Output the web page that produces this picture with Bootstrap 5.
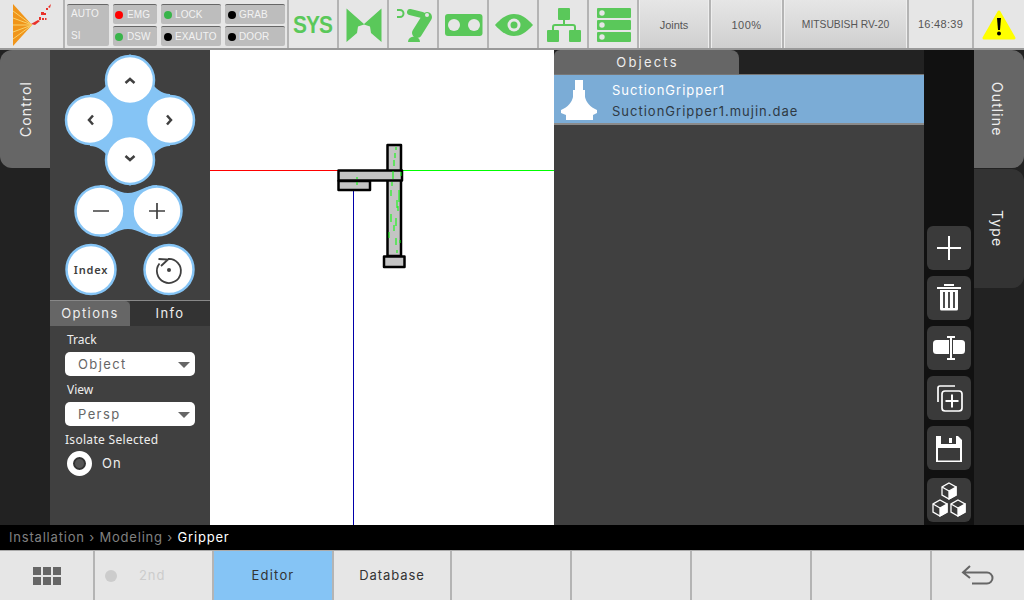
<!DOCTYPE html>
<html lang="en">
<head>
<meta charset="utf-8">
<title>Gripper</title>
<link href="https://cdn.jsdelivr.net/npm/bootstrap@5.3.0/dist/css/bootstrap.min.css" rel="stylesheet">
<style>
html,body{width:1024px;height:600px;overflow:hidden;margin:0;background:#000}
body{font-family:"Inter","Liberation Sans",sans-serif}
svg{display:block}
.topbar{height:50px;background:#e6e6e6;border-bottom:2px solid #999;font-family:"Liberation Sans",sans-serif}
.tcell{flex:none;border-right:2px solid #b4b4b4;height:48px}
.w-logo{width:65px}.w-stat{width:224px}.w-ic{width:50px}
.w-j{width:72px}.w-p{width:73px}.w-m{width:125px}.w-t{width:65px}.w-w{width:50px;border-right:0}
.systxt{font-size:24px;font-weight:700;color:#5ac85a;letter-spacing:-1px;transform:scaleX(.87);line-height:1;padding-top:1px}
.gbtn{background:linear-gradient(#e6e6e6,#cfcfcf);box-shadow:inset 1px 0 #eee,inset -1px 0 #eee;font-size:11px;color:#555;padding-top:2px}
.ls-a{letter-spacing:.5px}
.ls-b{font-size:10.3px}
.clock{font-size:11px;color:#555;letter-spacing:.3px;padding-top:1px}
.stat{padding:4px 2px 2px 2px;gap:4px;font-size:10px;letter-spacing:.1px;color:#f2f2f2}
.scol{gap:2px}
.sc-a{width:44px}.sc-b{width:60px}
.spill{height:20px;background:#bdbdbd;border-top:1px solid #666;border-radius:2px;padding-left:3px;gap:3px;line-height:1}
.sc-a .spill{padding-left:2px;gap:4px}
.sauto{width:42px;height:42px;background:#bdbdbd;border-top:1px solid #666;border-radius:2px;padding:1px 4px 2px;line-height:16px}
.dot{width:8px;height:8px;border-radius:50%;flex:none}
.d-r{background:#f00}.d-g{background:#38b44a}.d-k{background:#000}
.mainarea{height:475px}
.rail{width:50px;flex:none;background:#222}
.vtab{width:50px;height:118px;background:#666;color:#eee;font-size:14px;letter-spacing:1.1px;writing-mode:vertical-rl}
.vtab-l{transform:rotate(180deg);border-radius:0 12px 12px 0}
.vtab-r{border-radius:0 12px 12px 0;padding-right:3px}
.vtab-off{background:#333;height:119px;margin-top:1px}
.lpanel{width:160px;flex:none;background:#404040;color:#eee}
.ltabs{height:26px;border-top:1px solid #888;font-size:13px;letter-spacing:1.4px}
.ltab{width:80px;background:#333;padding-top:1px}
.ltab-on{background:#666;border-radius:0 5px 0 0}
.lbody{padding:6px 15px 0 15px;font-family:"Noto Sans","Liberation Sans",sans-serif;font-size:12px}
.flabel{padding-left:2px;height:20px;line-height:15px}
.flabel-w{padding-left:0;height:19px;line-height:16px;letter-spacing:.3px}
.fsel{height:24px;background:#fff;border-radius:5px;color:#666;font-family:"Inter",sans-serif;font-size:13px;letter-spacing:1.4px;padding:1px 5px 0 13px;margin-bottom:6px}
.caret{width:0;height:0;border-left:6px solid transparent;border-right:6px solid transparent;border-top:6px solid #666}
.radioo{width:25px;height:25px;border-radius:50%;border:6px solid #fff;background:#555;box-shadow:inset 0 0 0 2px #333;flex:none}
.optrow{font-family:"Inter",sans-serif;font-size:13px;letter-spacing:1px;padding-left:2px;gap:10px}
.stage{width:344px;flex:none;background:#fff}
.objs{width:370px;flex:none;background:#404040;font-size:13px;letter-spacing:1px}
.objhead{height:25px;background:#222;border-bottom:1px solid #777}
.objtab{width:185px;height:24px;background:#666;color:#eee;border-radius:6px 8px 0 0;letter-spacing:2.2px;padding-top:1px;padding-left:2px}
.objrow{height:50px;background:#7bacd6;border-bottom:2px solid #8a8a8a;line-height:21px}
.objic{width:58px;flex:none}
.objtxt{padding-top:5px}
.t-sub{color:#2f3a45}
.tools{width:50px;flex:none;background:#111;padding:0 3px 3px 3px;gap:6px}
.tbtn{width:44px;height:44px;background:#3a3a3a;border-radius:6px;flex:none}
.tbtn-gap{margin-bottom:2px}
.crumbs{height:25px;background:#000;color:#808080;font-size:13px;letter-spacing:.8px;padding-left:9px;line-height:25px}
.botbar{height:50px;background:#e6e6e6;border-top:1px solid #aaa;color:#333;font-size:13px;letter-spacing:.9px}
.bcell{width:120px;flex:none;border-right:2px solid #b4b4b4;padding-top:1px}
.bcell-a{width:95px}.bcell-b{width:119px;color:#ccc;padding-left:10px;gap:22px}.bcell-c{width:118px;background:#85c4f5;border-right:0;letter-spacing:1.2px}
.bcell-d{width:120px;border-left:2px solid #b4b4b4}
.bcell-e{flex:1 1 auto;border-right:0}
.discdot{width:12px;height:12px;border-radius:50%;background:#ccc}
</style>
</head>
<body>
<div class="topbar d-flex">
  <div class="tcell w-logo">
    <svg width="63" height="48" viewBox="0 0 63 48">
      <path fill="#f0951a" d="M13 4 32 25 13 46Z"/>
      <g stroke="#f9d26a" stroke-width="1" fill="none"><path d="M13 11 32 25M13 18 32 25M13 25H32M13 32 32 25M13 39 32 25"/></g>
      <g fill="#e8322a"><path d="M31 24 38 20 40 21 35 25Z"/><rect x="41" y="12" width="3" height="3"/><rect x="39" y="17" width="2" height="3"/><rect x="44" y="13" width="2" height="2"/><rect x="42" y="18" width="2" height="2"/><rect x="46" y="8" width="2" height="2"/><path d="M48 7 51 4 50 8Z"/><rect x="45" y="18" width="1.500" height="2"/></g>
    </svg>
  </div>
  <div class="tcell w-stat stat d-flex">
    <div class="sauto d-flex flex-column justify-content-between"><span>AUTO</span><span>SI</span></div>
    <div class="scol sc-a d-flex flex-column">
      <div class="spill d-flex align-items-center"><span class="dot d-r"></span>EMG</div>
      <div class="spill d-flex align-items-center"><span class="dot d-g"></span>DSW</div>
    </div>
    <div class="scol sc-b d-flex flex-column">
      <div class="spill d-flex align-items-center"><span class="dot d-g"></span>LOCK</div>
      <div class="spill d-flex align-items-center"><span class="dot d-k"></span>EXAUTO</div>
    </div>
    <div class="scol sc-b d-flex flex-column">
      <div class="spill d-flex align-items-center"><span class="dot d-k"></span>GRAB</div>
      <div class="spill d-flex align-items-center"><span class="dot d-k"></span>DOOR</div>
    </div>
  </div>
  <div class="tcell w-ic d-flex align-items-center justify-content-center"><span class="systxt">SYS</span></div>
  <div class="tcell w-ic"><svg width="48" height="48" viewBox="0 0 48 48"><path fill="#5ac85a" d="M7.500 8.500 25 24 42.500 8.500V42L32 33 31 26.500 25 24.500 19 26.500 18 33 7.500 42Z"/></svg></div>
  <div class="tcell w-ic"><svg width="48" height="48" viewBox="0 0 48 48"><path d="M8 10h3a3.500 3.500 0 0 1 0 7H8" fill="none" stroke="#5ac85a" stroke-width="2"/><path d="M21 12 33 15" stroke="#5ac85a" stroke-width="6" stroke-linecap="round"/><path d="M38 17 28 33" stroke="#5ac85a" stroke-width="10" stroke-linecap="round"/><circle cx="38" cy="15" r="2" fill="#e6e6e6"/><path fill="#5ac85a" d="M19 42a6 5.500 0 0 1 12 0Z"/></svg></div>
  <div class="tcell w-ic"><svg width="48" height="48" viewBox="0 0 48 48"><rect x="6" y="14" width="37.500" height="22" rx="3" fill="#5ac85a"/><circle cx="15" cy="25" r="6" fill="#e6e6e6"/><circle cx="35" cy="25" r="6" fill="#e6e6e6"/></svg></div>
  <div class="tcell w-ic"><svg width="48" height="48" viewBox="0 0 48 48"><path fill="#5ac85a" d="M6 25C13 17 19 14 25 14S37 17 44 25C37 33 31 36 25 36S13 33 6 25Z"/><circle cx="25" cy="25" r="6.500" fill="#e6e6e6"/><circle cx="25" cy="25" r="3.500" fill="#5ac85a"/></svg></div>
  <div class="tcell w-ic"><svg width="48" height="48" viewBox="0 0 48 48"><g fill="#5ac85a"><rect x="19" y="8" width="12" height="12" rx="1"/><rect x="8" y="30" width="12" height="12" rx="1"/><rect x="30" y="30" width="12" height="12" rx="1"/></g><path d="M25 20v5M14 31v-4a2 2 0 0 1 2-2h18a2 2 0 0 1 2 2v4" fill="none" stroke="#5ac85a" stroke-width="2"/></svg></div>
  <div class="tcell w-ic"><svg width="48" height="48" viewBox="0 0 48 48"><g fill="#5ac85a"><rect x="8" y="8" width="34" height="10" rx="1"/><rect x="8" y="20" width="34" height="10" rx="1"/><rect x="8" y="32" width="34" height="10" rx="1"/></g><g fill="#e6e6e6"><circle cx="13" cy="13" r="2.700"/><circle cx="13" cy="25" r="2.700"/><circle cx="13" cy="37" r="2.700"/></g></svg></div>
  <div class="tcell w-j gbtn d-flex align-items-center justify-content-center">Joints</div>
  <div class="tcell w-p gbtn ls-a d-flex align-items-center justify-content-center">100%</div>
  <div class="tcell w-m gbtn ls-b d-flex align-items-center justify-content-center">MITSUBISH RV-20</div>
  <div class="tcell w-t clock d-flex align-items-center justify-content-center">16:48:39</div>
  <div class="tcell w-w"><svg width="50" height="48" viewBox="0 0 50 48"><path fill="#ff0" stroke="#ff0" stroke-width="3" stroke-linejoin="round" d="M25 12 40 38H10Z"/><path d="M23 18h4l-1 12h-2Z" fill="#000"/><circle cx="25" cy="33.500" r="2" fill="#000"/></svg></div>
</div>

<div class="mainarea d-flex">
  <div class="rail">
    <div class="vtab vtab-l d-flex align-items-center justify-content-center">Control</div>
  </div>
  <div class="lpanel d-flex flex-column">
    <svg width="160" height="250" viewBox="0 0 160 250">
      <path fill="#85c4f5" d="M80 4 100 30C104 38 112 44 120 44L120 96C112 96 104 102 100 110L80 136 60 110C56 102 48 96 40 96L40 44C48 44 56 38 60 30Z"/>
      <path fill="#85c4f5" d="M50 135C60 135 68 143 78 143S96 135 107 135V187C96 187 88 179 78 179S60 187 50 187Z"/>
      <g fill="#fff" stroke="#85c4f5" stroke-width="2.500">
        <circle cx="80" cy="30" r="24"/><circle cx="40" cy="70" r="24"/><circle cx="120" cy="70" r="24"/><circle cx="80" cy="110" r="24"/>
        <circle cx="50" cy="161" r="24.500"/><circle cx="107" cy="161" r="24.500"/>
        <circle cx="41" cy="219.500" r="24.500"/><circle cx="119" cy="219.500" r="24.500"/>
      </g>
      <g fill="none" stroke="#404040" stroke-width="2.500">
        <path d="M75.500 33 80 29 84.500 33"/><path d="M43 65.500 39 70 43 74.500"/><path d="M117 65.500 121 70 117 74.500"/><path d="M75.500 106 80 110 84.500 106"/>
      </g>
      <path fill="none" stroke="#404040" stroke-width="1.700" d="M43 161H59M99 161H115M107 153V169"/>
      <path fill="none" stroke="#404040" stroke-width="1.800" d="M118 209A12 12 0 1 1 109.500 213.500M108.500 209 118 209.500 111 216"/>
      <circle cx="119" cy="220" r="2" fill="#404040"/>
      <text x="41" y="223.500" text-anchor="middle" font-family="Noto Sans,Liberation Sans,sans-serif" font-weight="600" font-size="11" letter-spacing=".8" fill="#404040">Index</text>
    </svg>
    <div class="ltabs d-flex">
      <div class="ltab ltab-on d-flex align-items-center justify-content-center">Options</div>
      <div class="ltab d-flex align-items-center justify-content-center">Info</div>
    </div>
    <div class="lbody flex-grow-1">
      <div class="flabel">Track</div>
      <div class="fsel d-flex align-items-center justify-content-between"><span>Object</span><span class="caret"></span></div>
      <div class="flabel">View</div>
      <div class="fsel d-flex align-items-center justify-content-between"><span>Persp</span><span class="caret"></span></div>
      <div class="flabel flabel-w">Isolate Selected</div>
      <div class="optrow d-flex align-items-center"><span class="radioo"></span><span>On</span></div>
    </div>
  </div>
  <div class="stage">
    <svg width="344" height="475" viewBox="210 50 344 475">
      <path d="M210 170.500H339" stroke="#f00"/>
      <path d="M402 170.500H554" stroke="#0f0"/>
      <path d="M353.500 190V525" stroke="#00a"/>
      <g fill="#c4c4c4" stroke="#000" stroke-width="2.500" stroke-linejoin="round">
        <path d="M387.500 145H401V256H387.500Z"/>
        <path d="M338.500 181H370V190H338.500Z"/>
        <path d="M338.500 170.500H402V180.500H338.500Z"/>
        <path d="M384 256.500H404.500V267H384Z"/>
      </g>
      <g stroke="#0f0" fill="none"><path d="M395 153v5M394 160v6M396 147v3M393 171v8M392 182v4M391 190v6M399 190v12M397 200v8M391 214v8M396 218v8M398 206v5M396 238v7M394 225v6M389 232v6M400 240v3M397 250v3M401 172v4"/><path d="M357 177v2M357 182v3"/></g>
    </svg>
  </div>
  <div class="objs d-flex flex-column">
    <div class="objhead"><div class="objtab d-flex align-items-center justify-content-center">Objects</div></div>
    <div class="objrow d-flex">
      <div class="objic">
        <svg width="58" height="48" viewBox="0 0 58 48"><path fill="#fff" d="M21 5H29V15H31V22C32 27 36 32 43 35V38L39 40V45H12V40L7 38V35C14 32 18 27 19 22V15H21Z"/></svg>
      </div>
      <div class="objtxt"><div class="text-white">SuctionGripper1</div><div class="t-sub">SuctionGripper1.mujin.dae</div></div>
    </div>
  </div>
  <div class="tools d-flex flex-column justify-content-end">
    <div class="tbtn"><svg width="44" height="44" viewBox="0 0 44 44"><path d="M22 10V34M10 22H34" stroke="#fff" stroke-width="2"/></svg></div>
    <div class="tbtn"><svg width="44" height="44" viewBox="0 0 44 44"><path d="M17 8h10v2H17ZM10 11h24v2H10Z" fill="#fff"/><path d="M13 14h18v19a1.500 1.500 0 0 1-1.500 1.500h-15A1.500 1.500 0 0 1 13 33Z" fill="#fff"/><path d="M17 16v16M22 16v16M27 16v16" stroke="#3a3a3a" stroke-width="1.800"/></svg></div>
    <div class="tbtn"><svg width="44" height="44" viewBox="0 0 44 44"><rect x="6" y="14" width="32" height="14" rx="3.500" fill="#fff"/><path d="M22 10h4V32h-4Z" fill="#3a3a3a"/><path d="M20 11h8M24 11V33M20 33h8" stroke="#fff" stroke-width="2" fill="none"/></svg></div>
    <div class="tbtn"><svg width="44" height="44" viewBox="0 0 44 44"><path d="M11 26V12a2 2 0 0 1 2-2H28" fill="none" stroke="#fff" stroke-width="1.700"/><rect x="15" y="15" width="20" height="20" rx="3" fill="none" stroke="#fff" stroke-width="1.700"/><path d="M25 18.500V31.500M18.500 25H31.500" stroke="#fff" stroke-width="2"/></svg></div>
    <div class="tbtn tbtn-gap"><svg width="44" height="44" viewBox="0 0 44 44"><path fill="#fff" d="M9 10H31L35 14V36H9Z"/><rect x="14" y="10" width="15" height="8" fill="#3a3a3a"/><rect x="22" y="12" width="3" height="5" fill="#fff"/><rect x="11" y="22" width="22" height="12.500" fill="#3a3a3a"/></svg></div>
    <div class="tbtn"><svg width="44" height="44" viewBox="0 0 44 44"><g stroke="#fff" stroke-width="1.300"><path d="M22 5 29 9 29 17 22 21 15 17 15 9Z" fill="#3a3a3a"/><path d="M22 13 29 9V17L22 21Z" fill="#fff"/><path d="M22 13 15 9" fill="none"/><path d="M13 22 20 26 20 34 13 38 6 34 6 26Z" fill="#3a3a3a"/><path d="M13 30 20 26V34L13 38Z" fill="#fff"/><path d="M13 30 6 26" fill="none"/><path d="M31 22 38 26 38 34 31 38 24 34 24 26Z" fill="#3a3a3a"/><path d="M31 30 38 26V34L31 38Z" fill="#fff"/><path d="M31 30 24 26" fill="none"/></g></svg></div>
  </div>
  <div class="rail">
    <div class="vtab vtab-r d-flex align-items-center justify-content-center">Outline</div>
    <div class="vtab vtab-r vtab-off d-flex align-items-center justify-content-center">Type</div>
  </div>
</div>

<div class="crumbs">Installation › Modeling › <span class="text-white">Gripper</span></div>

<div class="botbar d-flex">
  <div class="bcell bcell-a d-flex align-items-center justify-content-center">
    <svg width="28" height="18" viewBox="0 0 28 18"><g fill="#666"><rect width="8" height="8"/><rect x="10" width="8" height="8"/><rect x="20" width="8" height="8"/><rect y="10" width="8" height="8"/><rect x="10" y="10" width="8" height="8"/><rect x="20" y="10" width="8" height="8"/></g></svg>
  </div>
  <div class="bcell bcell-b d-flex align-items-center"><span class="discdot"></span><span>2nd</span></div>
  <div class="bcell bcell-c d-flex align-items-center justify-content-center">Editor</div>
  <div class="bcell bcell-d d-flex align-items-center justify-content-center">Database</div>
  <div class="bcell"></div>
  <div class="bcell"></div>
  <div class="bcell"></div>
  <div class="bcell"></div>
  <div class="bcell bcell-e d-flex align-items-center justify-content-center">
    <svg width="34" height="24" viewBox="0 0 34 24"><path d="M9 2 2 8.500 9 14M2 8.500H26a5.500 5.500 0 0 1 0 11H11" fill="none" stroke="#666" stroke-width="2"/></svg>
  </div>
</div>
<script src="https://cdn.jsdelivr.net/npm/bootstrap@5.3.0/dist/js/bootstrap.bundle.min.js"></script>
</body>
</html>
